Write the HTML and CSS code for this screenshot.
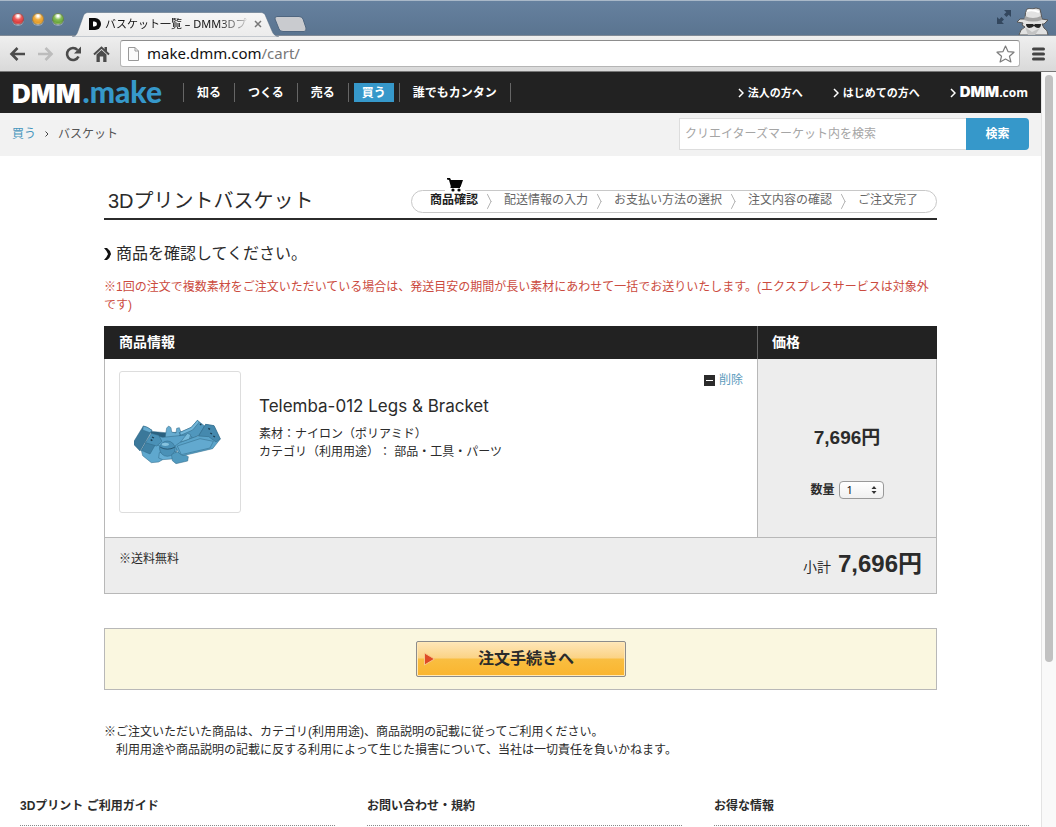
FILE: index.html
```html
<!DOCTYPE html>
<html lang="ja">
<head>
<meta charset="utf-8">
<title>バスケット一覧 – DMM3Dプリント</title>
<link rel="stylesheet" href="styles.css">
</head>
<body>
<div class="window">
  <div class="titlebar">
    <div class="lights">
      <button class="light light-red" aria-label="閉じる"></button>
      <button class="light light-yellow" aria-label="しまう"></button>
      <button class="light light-green" aria-label="拡大"></button>
    </div>
    <div class="tab">
      <svg class="tab-shape" width="208" height="25" viewBox="0 0 208 25" aria-hidden="true">
        <defs><linearGradient id="tabfill" x1="0" y1="0" x2="0" y2="1"><stop offset="0" stop-color="#f6f6f6"/><stop offset="1" stop-color="#ebebeb"/></linearGradient></defs>
        <path d="M0 25C4 24 5 22 6 19L11 5C12 2 13 .5 17 .5H188C192 .5 193 2 194 5L200 19C201 22 203 24 207 25Z" fill="url(#tabfill)" stroke="#50657c" stroke-opacity=".5"/>
      </svg>
      <svg class="favicon" width="14" height="14" viewBox="0 0 14 14" aria-hidden="true"><path fill="#0a0a0a" d="M1 1H7A6 6 0 0 1 7 13H1Z"/><path fill="#fff" d="M5 4.500h1.500a2.500 2.500 0 0 1 0 5H5Z"/></svg>
      <span class="tab-title">バスケット一覧 – DMM3Dプ</span>
      <button class="tab-close" aria-label="タブを閉じる"><svg width="8" height="8" viewBox="0 0 8 8"><path d="M1 1L7 7M7 1L1 7" stroke="#777" stroke-width="1.500"/></svg></button>
    </div>
    <button class="new-tab" aria-label="新しいタブ"><svg width="33" height="16" viewBox="0 0 33 16"><path d="M3 .5H25Q28 .5 29 3L32 12Q32.500 15.500 30 15.500H9Q6 15.500 5 13L1 3Q.5 .5 3 .5Z" fill="#c9cbcf" stroke="#4f6680"/></svg></button>
    <div class="title-spacer"></div>
    <button class="expand" aria-label="全画面"><svg width="16" height="16" viewBox="0 0 16 16"><path fill="#33475e" d="M8 1H15V8L12.700 5.700L10.500 8L8 5.500L10.300 3.300ZM1 8L3.300 10.300L5.500 8L8 10.500L5.700 12.700L8 15H1Z"/></svg></button>
    <svg class="incognito" width="34" height="28" viewBox="0 0 34 28" aria-hidden="true">
      <path d="M3 28Q4 22 9 20L6 18L7 16L1 15L4 12H9Q9 4 11 2Q13 1 16 2Q20 0 24 2Q25 6 26 12L32 13L28 17H26L28 21Q32 23 32 28Z" fill="#e2e2e2" stroke="#555" stroke-width="1"/>
      <path d="M9 9Q17 13 25 9L26 13Q17 16 8 13Z" fill="#a5a5a5"/>
      <path d="M10 17H17L18 18L19 17H25Q25 21 22 21Q20 21 18 19Q16 21 13 21Q10 20 10 17Z" fill="#252525"/>
      <path d="M9 20L16 25L24 21L19 28H12Z" fill="#c4c4c4"/>
      <path d="M11 4Q16 2 23 5" stroke="#fff" fill="none" stroke-width="2"/>
    </svg>
  </div>

  <div class="toolbar">
    <div class="tools">
      <button aria-label="戻る"><svg width="17" height="16" viewBox="0 0 17 16"><path d="M16 8H3M8.500 2L2.500 8L8.500 14" fill="none" stroke="#4b4b4b" stroke-width="2.600"/></svg></button>
      <button aria-label="進む"><svg width="17" height="16" viewBox="0 0 17 16"><path d="M1 8H14M8.500 2L14.500 8L8.500 14" fill="none" stroke="#bcbcbc" stroke-width="2.600"/></svg></button>
      <button aria-label="再読み込み"><svg width="17" height="16" viewBox="0 0 17 16"><path d="M13.500 10.500A6 6 0 1 1 12.500 4" fill="none" stroke="#4b4b4b" stroke-width="2.600"/><path d="M16 .5V7.500H9Z" fill="#4b4b4b"/></svg></button>
      <button aria-label="ホーム"><svg width="17" height="16" viewBox="0 0 17 16"><path d="M1 8.500L8.500 1.500L16 8.500" fill="none" stroke="#4b4b4b" stroke-width="2"/><path d="M3.500 8.500L8.500 4L13.500 8.500V16H10.200V10.500H6.800V16H3.500ZM11.500 1H14V6L11.500 4Z" fill="#4b4b4b"/></svg></button>
    </div>
    <div class="address">
      <svg width="13" height="16" viewBox="0 0 13 16" aria-hidden="true"><path d="M1.500 1.500H8L11.500 5V14.500H1.500ZM8 1.500V5H11.500" fill="#fbfbfb" stroke="#999"/></svg>
      <div class="url" role="textbox" contenteditable="true" spellcheck="false" aria-label="アドレス">make.dmm.com<span class="url-path">/cart/</span></div>
      <button class="star" aria-label="ブックマーク"><svg width="19" height="18" viewBox="0 0 19 18"><path d="M9.500 1L12 6.600L18 7.200L13.500 11.300L14.900 17L9.500 14L4.100 17L5.500 11.300L1 7.200L7 6.600Z" fill="#fff" stroke="#7c7c7c" stroke-width="1.200" stroke-linejoin="round"/></svg></button>
    </div>
    <button class="menu" aria-label="メニュー"><svg width="13" height="14" viewBox="0 0 13 14"><path d="M1.500 2H11.500M1.500 7H11.500M1.500 12H11.500" stroke="#444" stroke-width="3" stroke-linecap="round"/></svg></button>
  </div>

  <div class="viewport">
    <div class="page">
      <header class="site-header">
        <a class="logo" href="#"><span class="logo-dmm">DMM</span><span class="logo-make">.make</span></a>
        <nav class="nav">
          <a href="#">知る</a><a href="#">つくる</a><a href="#">売る</a><a href="#"><span class="nav-active">買う</span></a><a href="#">誰でもカンタン</a>
        </nav>
        <div class="side-links">
          <a href="#"><svg width="6" height="10" viewBox="0 0 6 10" aria-hidden="true"><path d="M1 1L5 5L1 9" fill="none" stroke="#fff" stroke-width="1.500"/></svg>法人の方へ</a>
          <a href="#"><svg width="6" height="10" viewBox="0 0 6 10" aria-hidden="true"><path d="M1 1L5 5L1 9" fill="none" stroke="#fff" stroke-width="1.500"/></svg>はじめての方へ</a>
          <a href="#"><svg width="6" height="10" viewBox="0 0 6 10" aria-hidden="true"><path d="M1 1L5 5L1 9" fill="none" stroke="#fff" stroke-width="1.500"/></svg><span class="mini-logo"><span class="mini-dmm">DMM</span><span class="mini-com">.com</span></span></a>
        </div>
      </header>

      <div class="subbar">
        <nav class="crumbs"><a href="#">買う</a><svg width="4" height="6" viewBox="0 0 4 6" aria-hidden="true"><path d="M.5 .5L3 3L.5 5.500" fill="none" stroke="#444"/></svg><span>バスケット</span></nav>
        <form class="search">
          <input type="text" placeholder="クリエイターズマーケット内を検索" aria-label="クリエイターズマーケット内を検索">
          <button type="button">検索</button>
        </form>
      </div>

      <main class="main">
        <div class="title-row">
          <h1>3Dプリントバスケット</h1>
          <ol class="steps">
            <li class="current"><svg class="cart" width="20" height="16" viewBox="0 0 20 16" aria-hidden="true"><path fill="#fff" d="M0 10H20V16H0Z"/><path fill="#050505" d="M2 1H5L6 3H18L15.500 10H6L4 3L2 2.500ZM5 10L7 9H15V11H6Z"/><circle cx="8" cy="13" r="1.600" fill="#050505"/><circle cx="14" cy="13" r="1.600" fill="#050505"/></svg>商品確認</li>
            <li>配送情報の入力</li>
            <li>お支払い方法の選択</li>
            <li>注文内容の確認</li>
            <li>ご注文完了</li>
          </ol>
        </div>

        <h2><svg width="8" height="12" viewBox="0 0 8 12" aria-hidden="true"><path d="M0 0H3Q6 2 7 6Q6 10 3 12H0Q3 9 4 6Q3 3 0 0Z" fill="#111"/></svg>商品を確認してください。</h2>
        <p class="notice">※1回の注文で複数素材をご注文いただいている場合は、発送目安の期間が長い素材にあわせて一括でお送りいたします。(エクスプレスサービスは対象外です)</p>

        <table class="basket">
          <thead><tr><th scope="col">商品情報</th><th scope="col" class="price-head">価格</th></tr></thead>
          <tbody>
            <tr>
              <td class="item-cell">
                <div class="item">
                  <a class="thumb" href="#" aria-label="Telemba-012 Legs &amp; Bracket">
                    <svg width="92" height="48" viewBox="24 38 276 144">
                      <g stroke="#2f6685" stroke-width="1.500" stroke-linejoin="round">
                        <path d="M72 78L118 82L190 80L186 100L115 104L80 96Z" fill="#2b6180"/>
                        <path d="M118 92L122 68L128 62L135 67L137 80L150 83L152 69L160 67L166 84L155 98H118Z" fill="#67acd0"/>
                        <path d="M160 82L196 66L214 45L235 61L232 82L198 101L165 96Z" fill="#5097bd"/>
                        <path d="M160 82L196 66L214 45L220 50L200 74L166 89Z" fill="#72b6d9"/>
                        <path d="M24 108L52 62L64 66L78 75L60 106L42 137L24 118Z" fill="#3b789a"/>
                        <path d="M52 62L64 66L78 75L72 82L50 74Z" fill="#66abd0"/>
                        <path d="M76 88L110 96L190 88L199 96L157 118L150 144L100 140L70 124Z" fill="#5ba3ca"/>
                        <path d="M46 135L62 108L100 121L110 163L98 170L76 172L50 151Z" fill="#5fa8ce"/>
                        <path d="M46 135L62 108L88 118L72 146Z" fill="#3f81a5"/>
                        <path d="M58 112L76 84L98 90L108 108L92 122Z" fill="#4a91b7"/>
                        <path d="M100 142L150 138L148 160L110 163L98 158Z" fill="#67afd5"/>
                        <path d="M136 145L160 139L187 154L185 167L150 175L139 166Z" fill="#519abf"/>
                        <path d="M147 122L162 111L218 91L239 57L264 61L283 101L260 130L171 151L158 143Z" fill="#5ba4ca"/>
                        <path d="M218 92L239 57L264 61L283 101L270 110L248 94Z" fill="#4589ae"/>
                        <path d="M154 122L222 100L262 108L252 128L166 148Z" fill="#62a9cf"/>
                        <path d="M164 110L184 84L194 88L190 101Z" fill="#77bbdc"/>
                        <circle cx="124" cy="130" r="23" fill="#4a91b7"/>
                      </g>
                      <path d="M103 126Q124 137 146 126" fill="none" stroke="#1f4c66" stroke-width="2.500"/>
                      <path d="M78 95L84 98M74 103L79 106M247 69L252 72M253 83L258 86M262 92L267 95M222 56L226 59" stroke="#1b3c50" stroke-width="4"/>
                      <ellipse cx="118" cy="117" rx="11" ry="5" fill="#86c3df"/>
                    </svg>
                  </a>
                  <div class="details">
                    <h3>Telemba-012 Legs &amp; Bracket</h3>
                    <p>素材：ナイロン（ポリアミド）<br>カテゴリ（利用用途）： 部品・工具・パーツ</p>
                  </div>
                  <a class="delete" href="#"><svg width="11" height="11" viewBox="0 0 11 11" aria-hidden="true"><path fill="#2b2b2b" d="M0 0H11V11H0Z"/><path fill="#fff" d="M2 5H9V6H2Z"/></svg>削除</a>
                </div>
              </td>
              <td class="price-cell">
                <div class="price">7,696円</div>
                <div class="qty"><label for="qty">数量</label><span class="select-wrap"><select id="qty"><option>1</option><option>2</option><option>3</option></select><svg width="6" height="8" viewBox="0 0 6 8" aria-hidden="true"><path d="M3 0L5.500 3H.5ZM3 8L.5 5H5.500Z" fill="#333"/></svg></span></div>
              </td>
            </tr>
          </tbody>
          <tfoot><tr><td colspan="2"><div class="summary"><span>※送料無料</span><span class="total"><span class="total-label">小計</span><strong>7,696円</strong></span></div></td></tr></tfoot>
        </table>

        <div class="checkout"><button type="button"><svg width="11" height="14" viewBox="0 0 11 14" aria-hidden="true"><path d="M.5 1L10.500 7L.5 13Z" fill="#de4a26" stroke="#f7c589"/></svg><span>注文手続きへ</span></button></div>

        <p class="terms">※ご注文いただいた商品は、カテゴリ(利用用途)、商品説明の記載に従ってご利用ください。<br>　利用用途や商品説明の記載に反する利用によって生じた損害について、当社は一切責任を負いかねます。</p>
      </main>

      <footer class="site-footer">
        <h4>3Dプリント ご利用ガイド</h4>
        <h4>お問い合わせ・規約</h4>
        <h4>お得な情報</h4>
      </footer>
    </div>
    <div class="scrollbar" aria-hidden="true"><div class="scroll-thumb"></div></div>
  </div>
</div>
</body>
</html>
```
FILE: styles.css
```css
* { box-sizing: border-box; }
body, h1, h2, h3, h4, p, ol { margin: 0; padding: 0; }
body {
  font: 12px/18px "Liberation Sans", "Noto Sans CJK JP", sans-serif;
  text-spacing-trim: space-all;
  color: #2b2b2b;
  background: #fff;
}
button { font: inherit; color: inherit; background: none; border: 0; padding: 0; }
a { text-decoration: none; color: inherit; }
svg { display: block; flex: none; }

.window { display: flex; flex-direction: column; height: 100vh; overflow: hidden; }

/* Browser frame */
.titlebar {
  display: flex;
  height: 36px;
  flex: none;
  background: linear-gradient(#66819f, #5a7490);
  border-top: 1px solid #a9b8c8;
  border-bottom: 1px solid #808a96;
}
.lights { display: flex; gap: 8px; padding: 12px 0 0 12px; }
.light { width: 12px; height: 12px; border-radius: 50%; border: 1px solid #4a4a4a66; box-shadow: 0 1px 0 #ffffff55; }
.light-red { background: radial-gradient(circle at 50% 20%, #fff 0 8%, #ef5a58 40%, #d93e40 70%, #ff9a96); }
.light-yellow { background: radial-gradient(circle at 50% 20%, #fff 0 8%, #f0ae3e 40%, #e59c2c 70%, #ffe68a); }
.light-green { background: radial-gradient(circle at 50% 20%, #fff 0 8%, #85bd55 40%, #6aa53e 70%, #c8f598); }
.tab { position: relative; display: flex; align-items: center; width: 208px; height: 25px; margin: 11px 0 0 8px; padding: 0 18px 2px 16px; }
.tab-shape { position: absolute; left: 0; top: 0; }
.favicon { position: relative; }
.tab-title {
  position: relative;
  flex: 1;
  margin-left: 3px;
  font-size: 11px;
  font-family: "Noto Sans", "Noto Sans CJK JP", sans-serif;
  color: #111;
  white-space: nowrap;
  mask-image: linear-gradient(90deg, #000 75%, transparent);
}
.tab-close { position: relative; }
.new-tab { align-self: flex-start; margin: 15px 0 0 -6px; }
.title-spacer { flex: 1; }
.expand { align-self: flex-start; margin: 8px 4px 0 0; }
.incognito { align-self: flex-end; margin-right: 6px; }

.toolbar {
  display: flex;
  align-items: center;
  height: 36px;
  flex: none;
  padding: 0 11px 0 9px;
  background: linear-gradient(#efefef, #d9d9d9);
  border-bottom: 1px solid #777;
}
.tools { display: flex; gap: 11px; margin-right: 10px; }
.address {
  display: flex;
  align-items: center;
  flex: 1;
  height: 27px;
  padding: 0 4px 0 6px;
  background: #fff;
  border: 1px solid #b5b5b5;
  border-top-color: #8d8d8d;
  border-radius: 3px;
}
.url { flex: 1; margin-left: 7px; padding-bottom: 2px; font: 15px/20px "Noto Sans", sans-serif; color: #111; outline: 0; }
.url-path { color: #777; }
.menu { margin-left: 12px; }

.viewport { display: flex; flex: 1; min-height: 0; }
.page { flex: 1; min-width: 0; overflow: hidden; }
.scrollbar { width: 15px; flex: none; padding: 3px 3px 0; background: #f9f9f9; border-left: 1px solid #e3e3e3; }
.scroll-thumb { height: 78%; border-radius: 4px; background: #c1c1c1; }

/* Site header */
.site-header { display: flex; align-items: center; height: 41px; padding: 0 13px 0 12px; background: #222; color: #fff; font-weight: bold; }
.logo { display: flex; align-items: baseline; width: 171px; line-height: 28px; }
.logo-dmm { font-family: Inter, sans-serif; font-weight: 900; font-size: 26px; }
.logo-make { margin-left: 2px; font-family: Lato, sans-serif; font-weight: 900; font-size: 30px; color: #3698ca; }
.nav { display: flex; border-left: 1px solid #666; line-height: 20px; height: 19px; }
.nav a { padding: 0 13px; border-right: 1px solid #666; }
.nav-active { display: block; height: 19px; margin: 0 -8px; padding: 0 8px; background: #3698ca; }
.side-links { display: flex; gap: 30px; margin-left: auto; font-size: 11px; }
.side-links a { display: flex; align-items: center; gap: 4px; }
.mini-logo { display: flex; align-items: baseline; }
.mini-dmm { font-family: Inter, sans-serif; font-weight: 900; font-size: 15px; }
.mini-com { font-family: "Open Sans", sans-serif; font-size: 12px; }

.subbar { display: flex; align-items: center; justify-content: space-between; height: 43px; padding: 0 12px 2px; background: #f2f2f2; }
.crumbs { display: flex; align-items: center; gap: 9px; color: #555; }
.crumbs a { color: #4796bd; }
.search { display: flex; height: 32px; }
.search input { width: 287px; padding: 0 5px; border: 1px solid #ddd; border-right: 0; border-radius: 0; background: #fff; font: inherit; outline: 0; }
.search input::placeholder { color: #a5a5a5; opacity: 1; }
.search button { width: 63px; border-radius: 0 4px 4px 0; background: #3698ca; color: #fff; font-weight: bold; }

/* Basket */
.main { width: 80%; min-width: 833px; margin: 0 auto; padding-top: 30px; }
.title-row { display: flex; align-items: flex-end; justify-content: space-between; height: 34px; border-bottom: 2px solid #2b2b2b; padding-bottom: 5px; }
h1 { padding-left: 4px; font-size: 20px; line-height: 24px; font-weight: normal; }
.steps { display: flex; list-style: none; height: 23px; padding: 0 18px; border: 1px solid #c8c8c8; border-radius: 12px; line-height: 18px; color: #666; }
.steps li { display: flex; align-items: flex-start; position: relative; }
.steps li + li::before {
  content: "";
  width: 10px;
  height: 10px;
  margin: 5px 11px 0 4px;
  border: solid #999;
  border-width: 1px 1px 0 0;
  transform: scaleX(.5) rotate(45deg);
}
.steps .current { color: #222; font-weight: bold; }
.cart { position: absolute; left: 15px; top: -14px; }
h2 { display: flex; align-items: center; gap: 4px; margin: 22px 0 12px; font-size: 16px; line-height: 24px; font-weight: normal; }
.notice { margin-bottom: 12px; color: #cb4b40; }

.basket { width: 100%; border-collapse: separate; border-spacing: 0; }
.basket th { height: 33px; padding: 0 14px 2px; background: #222; color: #fff; font-size: 14px; text-align: left; }
.basket th:first-child { padding-left: 15px; }
.basket .price-head { width: 180px; border-left: 1px solid #666; }
.basket td { padding: 0; border: 1px solid #b8b8b8; border-top: 0; }
.item-cell { background: #fff; }
.basket .item-cell { border-right: 0; vertical-align: top; }
.item { display: flex; align-items: flex-start; padding: 12px 14px 24px; }
.thumb { display: flex; align-items: center; justify-content: center; width: 122px; height: 142px; border: 1px solid #ddd; border-radius: 3px; }
.details { flex: 1; padding: 23px 0 0 18px; }
.details h3 { margin-bottom: 7px; font: 17px/24px Inter, sans-serif; }
.delete { display: flex; align-items: center; gap: 4px; color: #5b9bbd; }
.price-cell, .summary { background: #ededed; }
.basket .price-cell { padding-top: 26px; text-align: center; }
.price { margin: 0 0 29px; font-size: 19px; line-height: 28px; font-weight: bold; }
.qty { display: flex; align-items: center; justify-content: center; gap: 4px; font-weight: bold; }
.select-wrap { display: flex; align-items: center; position: relative; }
.select-wrap svg { position: absolute; right: 7px; pointer-events: none; }
.qty select { width: 45px; height: 18px; padding: 0 7px; appearance: none; border: 1px solid #999; border-radius: 4px; background: linear-gradient(#fff, #f0f0f0); font: 11px/14px "Noto Sans", sans-serif; color: #111; }
.summary { display: flex; justify-content: space-between; padding: 12px 14px; }
.total { display: flex; align-items: baseline; gap: 7px; line-height: 28px; }
.total-label { font-size: 14px; }
.total strong { font-size: 24px; }

.checkout { display: flex; justify-content: center; margin: 34px 0 33px; padding: 12px; border: 1px solid #b8b8b8; background: #faf7e0; }
.checkout button {
  display: flex;
  align-items: center;
  width: 210px;
  height: 36px;
  padding: 0 7px;
  border: 1px solid #8c8c8c;
  border-radius: 2px;
  background: linear-gradient(#fee6b8, #fbd385 47%, #f9be41 50%, #fab52f);
  box-shadow: inset 0 0 0 1px #ffe9b8;
  font-size: 16px;
  font-weight: bold;
}
.checkout span { flex: 1; }
.terms { white-space: nowrap; }

.site-footer { display: grid; grid-template-columns: repeat(3, 1fr); gap: 32px; padding: 38px 12px 0 20px; }
.site-footer h4 { padding-bottom: 10px; border-bottom: 1px dotted #888; font-size: 12px; }
```
